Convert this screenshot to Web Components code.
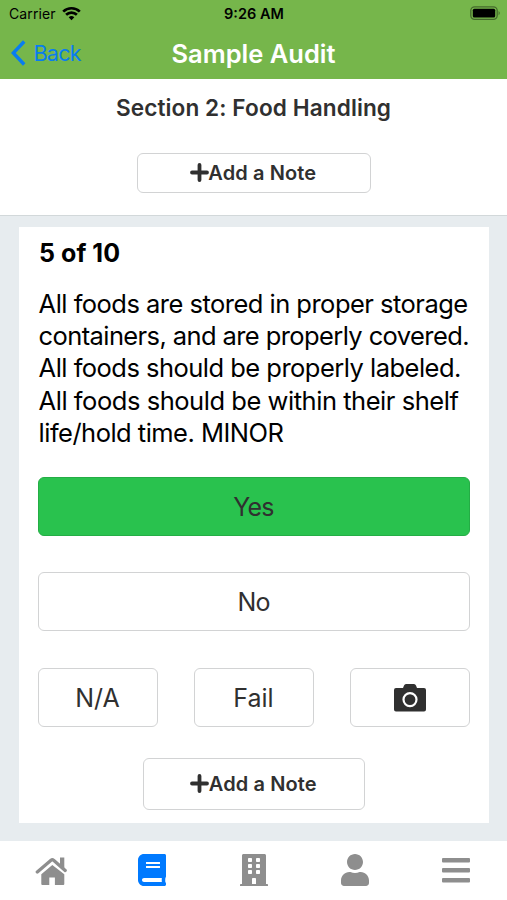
<!DOCTYPE html>
<html lang="en">
<head>
<meta charset="utf-8">
<title>Sample Audit</title>
<style>
html,body{margin:0;height:100%}
body{font-family:Inter,"Liberation Sans",sans-serif;color:#000;background:#e7ecef}
</style>
</head>
<body>
<audit-app></audit-app>
<script>
const define = (name, html) => customElements.define(name, class extends HTMLElement {
  constructor() {
    super();
    const t = document.createElement('template');
    t.innerHTML = html;
    this.attachShadow({mode: 'open'}).append(t.content.cloneNode(true));
  }
});

define('status-bar', `
<style>
:host{display:grid;grid-template-columns:1fr auto 1fr;align-items:center;height:27px;padding:0 6px 0 9px;box-sizing:border-box;font-size:14px;line-height:27px}
.left{display:flex;align-items:center;gap:6px}
.carrier{letter-spacing:.1px}
.time{font-weight:600;font-size:14.5px;letter-spacing:0;transform:translateX(-1px)}
svg{display:block}
.left svg{margin-top:-1px}
.battery{justify-self:end}
</style>
<div class="left"><span class="carrier">Carrier</span>
<svg width="19" height="15" viewBox="0 0 19 15"><path d="M9.5 14.2 6.7 11.3a4.1 4.1 0 0 1 5.6 0z"/><path d="M4.1 8.700a7.800 7.800 0 0 1 10.800 0M1.200 5.600a12 12 0 0 1 16.600 0" fill="none" stroke="#000" stroke-width="2.700"/></svg></div>
<span class="time">9:26 AM</span>
<svg class="battery" width="31" height="15" viewBox="0 0 31 15"><rect x=".8" y=".8" width="26.4" height="12.6" rx="3.8" fill="none" stroke="#000" stroke-opacity=".42" stroke-width="1.3"/><rect x="2.8" y="2.8" width="22.4" height="8.6" rx="1.5"/><path d="M28.6 5q2.2 2.1 0 4.2z" fill-opacity=".45"/></svg>`);

define('nav-bar', `
<style>
:host{display:grid;grid-template-columns:1fr auto 1fr;align-items:center;height:52px;padding:0 11px;line-height:51px}
.back{display:flex;align-items:center;gap:7.5px;color:#087df0;font-size:21.5px;letter-spacing:-.75px}
.title{color:#fff;font-weight:600;font-size:25.5px;letter-spacing:0}
svg{display:block}
.back svg{margin-top:-1px}
</style>
<div class="back"><svg width="15" height="26" viewBox="0 0 15 26"><path d="M13.2 1.5 2.3 13 13.2 24.5" fill="none" stroke="currentColor" stroke-width="3.4"/></svg><span>Back</span></div>
<span class="title"><slot></slot></span>`);

define('app-button', `
<style>
:host{display:flex;align-items:center;justify-content:center;box-sizing:border-box;border:1.3px solid #d2d3d4;border-radius:6px;background:#fff;color:#303030;font-size:25px;line-height:1}
:host([selected]){background:#29c24e;border-color:#24ad45}
</style><slot></slot>`);

define('note-button', `
<style>
:host{display:block;width:234px;height:40px}
app-button{width:100%;height:100%;padding-right:1px;font-weight:600;font-size:20px;letter-spacing:.1px}
svg{display:block;margin-top:-1px}
span{margin-left:-.5px}
</style>
<app-button><svg width="19" height="19" viewBox="0 0 19 19"><path d="M9.5 2v15M2 9.500h15" stroke="#303030" stroke-width="3.800" stroke-linecap="round"/></svg><span><slot></slot></span></app-button>`);

define('section-header', `
<style>
:host{display:flex;flex-direction:column;align-items:center;box-sizing:border-box;height:137px;padding-top:14px;background:#fff;border-bottom:1.5px solid #d2d8da}
h2{margin:0 0 31px;font-size:22.6px;line-height:29px;font-weight:600;letter-spacing:.1px;color:#303030}
</style>
<h2><slot></slot></h2><note-button>Add a Note</note-button>`);

define('question-card', `
<style>
:host{display:flex;flex-direction:column;box-sizing:border-box;width:470px;height:596px;margin:11px 0 0 19px;padding:10px 19px 0;background:#fff}
h3{margin:0;font-size:25px;line-height:32px;height:32px;font-weight:700;letter-spacing:.05px;padding-left:1px}
.q{margin:19px 0 0;padding-left:.6px;line-height:32.2px;font-size:25.5px;letter-spacing:-.52px;height:161px;white-space:nowrap}
.q span{display:block}
.q .tight{letter-spacing:-.6px}
.wide{height:59px;flex:none;padding:1px 1px 0 0;letter-spacing:-.8px}
.yes{margin-top:28px}
.no{margin-top:36px}
.row{display:grid;grid-template-columns:repeat(3,120px);justify-content:space-between;margin-top:37px}
.row app-button{height:59px;padding:1px 1px 0 0}
.row .cam{padding:0 1px 0 0}
note-button{width:222px;height:52px;align-self:center;margin-top:31px}
</style>
<h3>5 of 10</h3>
<p class="q"><span>All foods are stored in proper storage </span><span class="tight">containers, and are properly covered. </span><span>All foods should be properly labeled. </span><span style="letter-spacing:-.46px">All foods should be within their shelf </span><span>life/hold time. MINOR</span></p>
<app-button class="wide yes" selected>Yes</app-button>
<app-button class="wide no">No</app-button>
<div class="row"><app-button>N/A</app-button><app-button>Fail</app-button><app-button class="cam"><svg width="32" height="28" viewBox="0 0 32 28"><path fill="#303030" d="M2 4h7l1-2.4Q10.6 0 12 0h8q1.4 0 2 1.6L23 4h7q2 0 2 2v19.500q0 2-2 2H2q-2 0-2-2V6q0-2 2-2z"/><circle cx="16" cy="15.600" r="6.500" fill="none" stroke="#fff" stroke-width="2.200"/></svg></app-button></div>
<note-button>Add a Note</note-button>`);

define('tab-bar', `
<style>
:host{display:flex;box-sizing:border-box;height:59px;margin-top:18px;padding-top:13px;background:#fff;color:#8e8e8e}
div{flex:1;display:flex;justify-content:center;align-items:flex-start}
svg{display:block;height:32px;width:28px;fill:currentColor}
.on{color:#007aff}
</style>
<div><svg style="width:32px" viewBox="0 0 32 32"><path d="M17.300 11 6.300 20.300V30q0 1 1 1H14.300V23.500H19.900V31H28.300q1 0 1-1V20.300z"/><path d="M25 3.500h4.300v12L25 11.500z"/><path d="M2.300 18 16 6.200q1.300-1 2.600 0L30.200 16.500" fill="none" stroke="currentColor" stroke-width="3.300" stroke-linecap="round"/></svg></div>
<div class="on"><svg viewBox="0 0 448 512"><path d="M448 360V24c0-13.300-10.700-24-24-24H96C43 0 0 43 0 96v320c0 53 43 96 96 96h328c13.300 0 24-10.700 24-24v-16c0-7.500-3.500-14.300-8.900-18.700-4.200-15.400-4.200-59.300 0-74.700 5.400-4.300 8.900-11.100 8.900-18.600zM128 134c0-3.300 2.700-6 6-6h212c3.300 0 6 2.700 6 6v20c0 3.300-2.700 6-6 6H134c-3.300 0-6-2.700-6-6v-20zm0 64c0-3.300 2.700-6 6-6h212c3.300 0 6 2.700 6 6v20c0 3.300-2.700 6-6 6H134c-3.300 0-6-2.700-6-6v-20zm253.400 250H96c-17.700 0-32-14.300-32-32 0-17.600 14.400-32 32-32h285.400c-1.900 17.100-1.900 46.900 0 64z"/></svg></div>
<div><svg viewBox="0 0 448 512"><path d="M436 480h-20V24c0-13-11-24-24-24H56C43 0 32 11 32 24v456H12c-7 0-12 5-12 12v20h448v-20c0-7-5-12-12-12z"/><g fill="#fff"><rect x="128" y="64" width="64" height="64" rx="12"/><rect x="256" y="64" width="64" height="64" rx="12"/><rect x="128" y="160" width="64" height="64" rx="12"/><rect x="256" y="160" width="64" height="64" rx="12"/><rect x="128" y="256" width="64" height="64" rx="12"/><rect x="256" y="256" width="64" height="64" rx="12"/><path d="M192 480v-84q0-12 12-12h40q12 0 12 12v84z"/></g></svg></div>
<div><svg viewBox="0 0 448 512"><path d="M224 256c70.700 0 128-57.300 128-128S294.700 0 224 0 96 57.300 96 128s57.300 128 128 128zm89.600 32h-16.700c-22.200 10.200-46.900 16-72.900 16s-50.600-5.800-72.900-16h-16.700C60.200 288 0 348.200 0 422.400V464c0 26.500 21.500 48 48 48h352c26.500 0 48-21.500 48-48v-41.600c0-74.200-60.200-134.400-134.400-134.400z"/></svg></div>
<div><svg viewBox="0 0 448 512"><rect y="64" width="448" height="72" rx="16"/><rect y="224" width="448" height="72" rx="16"/><rect y="384" width="448" height="72" rx="16"/></svg></div>`);

define('audit-app', `
<style>
:host{display:block;width:507px;height:900px;overflow:hidden;background:#e7ecef}
header{background:#76b64b}
</style>
<header><status-bar></status-bar><nav-bar>Sample Audit</nav-bar></header>
<section-header>Section 2: Food Handling</section-header>
<question-card></question-card>
<tab-bar></tab-bar>`);
</script>
</body>
</html>
